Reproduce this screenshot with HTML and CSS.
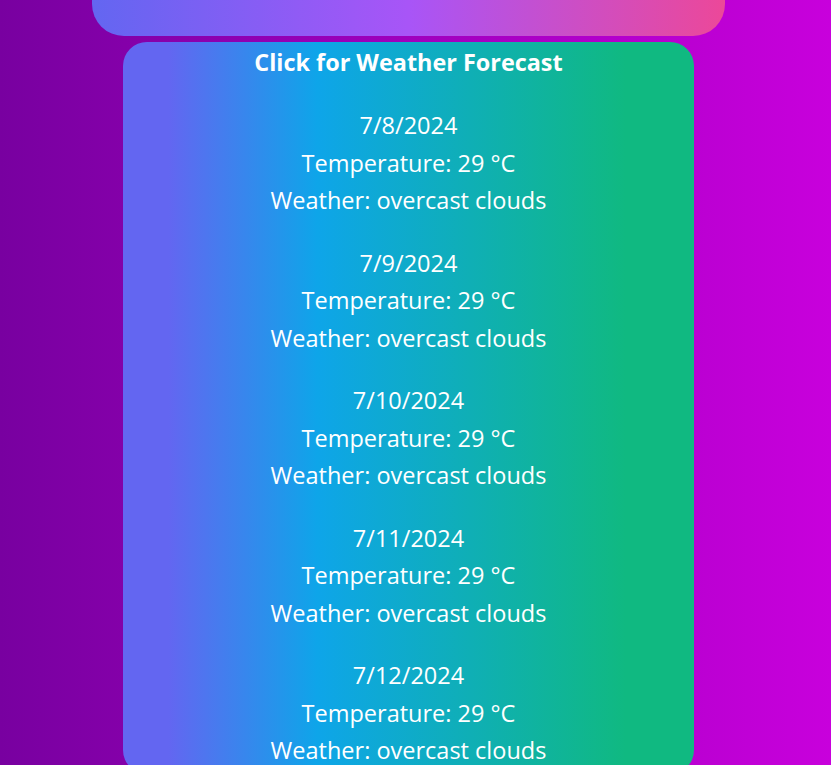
FILE: index.html
```html
<!DOCTYPE html>
<html lang="en">
<head>
<meta charset="utf-8">
<title>Weather Forecast</title>
<link rel="stylesheet" href="styles.css">
</head>
<body>
<div class="page">
  <div class="hero"></div>
  <div class="forecast">
    <h2 class="forecast-title">Click for Weather Forecast</h2>
    <div class="days">
      <div class="day">
        <div class="line">7/8/2024</div>
        <div class="line">Temperature: 29 °C</div>
        <div class="line">Weather: overcast clouds</div>
      </div>
      <div class="day">
        <div class="line">7/9/2024</div>
        <div class="line">Temperature: 29 °C</div>
        <div class="line">Weather: overcast clouds</div>
      </div>
      <div class="day">
        <div class="line">7/10/2024</div>
        <div class="line">Temperature: 29 °C</div>
        <div class="line">Weather: overcast clouds</div>
      </div>
      <div class="day">
        <div class="line">7/11/2024</div>
        <div class="line">Temperature: 29 °C</div>
        <div class="line">Weather: overcast clouds</div>
      </div>
      <div class="day">
        <div class="line">7/12/2024</div>
        <div class="line">Temperature: 29 °C</div>
        <div class="line">Weather: overcast clouds</div>
      </div>
    </div>
  </div>
</div>
</body>
</html>
```
FILE: styles.css
```css
html, body {
  margin: 0;
  padding: 0;
  height: 100%;
  overflow: hidden;
}
body {
  background: linear-gradient(to right, #7800a0, #c800dc);
  font-family: "Open Sans", "Noto Sans", sans-serif;
  color: #fff;
}
.page {
  width: 817px;
  display: flex;
  flex-direction: column;
  align-items: center;
}
.hero {
  width: 633px;
  height: 100px;
  margin-top: -64px;
  border-radius: 32px;
  background: linear-gradient(to right, #6366f1, #a855f7, #ec4899);
}
.forecast {
  width: 571px;
  margin-top: 6px;
  border-radius: 24px;
  background: linear-gradient(to right, #6366f1 8%, #0ea5e9 34%, #10b981 88%);
  text-align: center;
  padding-bottom: 4px;
}
.forecast-title {
  margin: 0;
  font-size: 23.4px;
  font-weight: 700;
  line-height: 40px;
}
.days {
  display: flex;
  flex-direction: column;
  gap: 25px;
  margin-top: 25px;
}
.line {
  font-size: 23.5px;
  line-height: 37.5px;
}
```
